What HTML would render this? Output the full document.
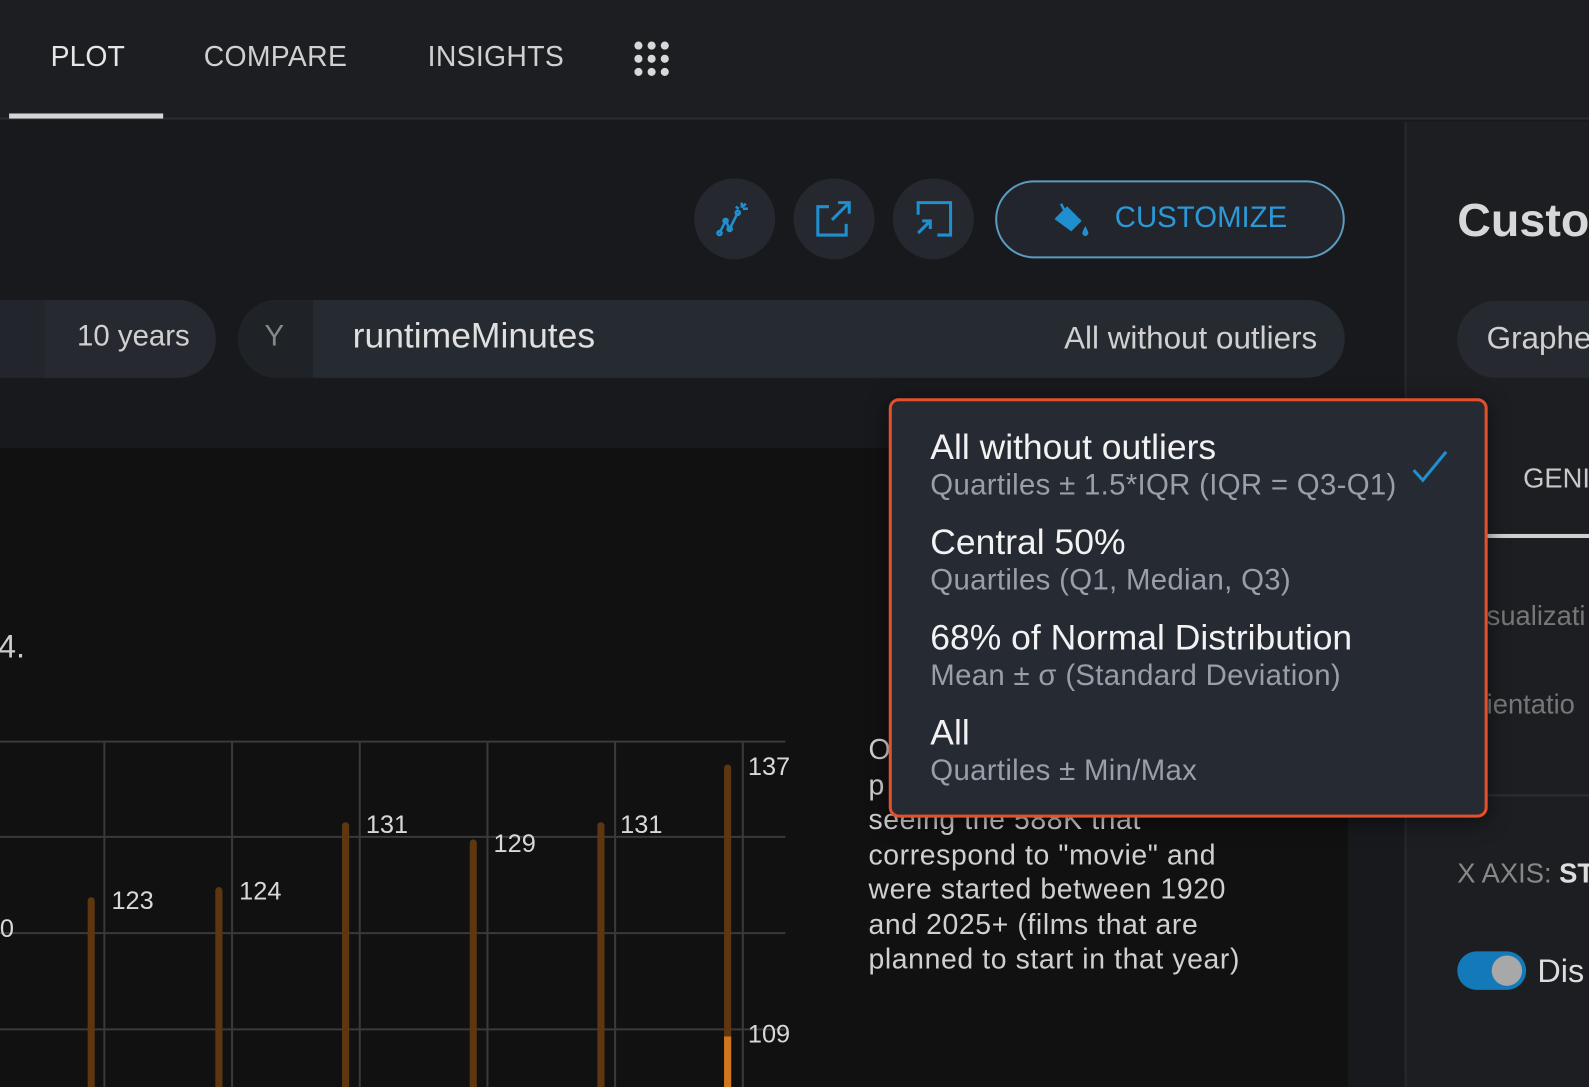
<!DOCTYPE html>
<html><head><meta charset="utf-8"><style>
*{margin:0;padding:0;box-sizing:border-box}
html,body{width:1589px;height:1073px;overflow:hidden;background:#17191c}
#w{position:absolute;left:0;top:0;width:1568px;height:1059px;transform:scale(1.0134,1.0132);transform-origin:0 0;font-family:"Liberation Sans",sans-serif;color:#ddd;background:#17191c}
.a{position:absolute;white-space:nowrap}
</style></head><body><div id="w">
<!-- nav -->
<div class="a" style="left:0;top:0;width:1568px;height:118px;background:#1c1e22;border-bottom:2px solid #2a2d31"></div>
<div class="a" style="left:50px;top:40px;font-size:28px;color:#e6e6e6">PLOT</div>
<div class="a" style="left:201px;top:40px;font-size:28px;color:#d0d0d0;letter-spacing:0.3px">COMPARE</div>
<div class="a" style="left:422px;top:40px;font-size:28px;color:#d0d0d0;letter-spacing:0.3px">INSIGHTS</div>
<svg class="a" style="left:624px;top:40px" width="40" height="38"><g fill="#d8d8d8">
<circle cx="6" cy="5" r="4"/><circle cx="19" cy="5" r="4"/><circle cx="32" cy="5" r="4"/>
<circle cx="6" cy="18" r="4"/><circle cx="19" cy="18" r="4"/><circle cx="32" cy="18" r="4"/>
<circle cx="6" cy="31" r="4"/><circle cx="19" cy="31" r="4"/><circle cx="32" cy="31" r="4"/></g></svg>
<div class="a" style="left:9px;top:112px;width:152px;height:5px;background:#d6d6d6"></div>
<!-- right panel -->
<div class="a" style="left:1386px;top:120px;width:190px;height:953px;background:#1c1e22;border-left:2px solid #25282c"></div>
<div class="a" style="left:1438px;top:190px;font-size:46px;font-weight:bold;color:#d8d8d8">Custo</div>
<div class="a" style="left:1438px;top:297px;width:200px;height:76px;border-radius:38px;background:#262a30"></div>
<div class="a" style="left:1467px;top:316px;font-size:31px;color:#d0d0d0">Graphe</div>
<div class="a" style="left:1503px;top:457px;font-size:27px;color:#c8c8c8">GENI</div>
<div class="a" style="left:1467px;top:527px;width:122px;height:4px;background:#d0d0d0"></div>
<div class="a" style="left:1467px;top:593px;font-size:27px;color:#777">sualizati</div>
<div class="a" style="left:1467px;top:680px;font-size:27px;color:#777">ientatio</div>
<div class="a" style="left:1467px;top:784px;width:122px;height:2px;background:#2c2f34"></div>
<div class="a" style="left:1438px;top:847px;font-size:27px;color:#888">X AXIS: <span style="color:#ddd;font-weight:bold">ST</span></div>
<div class="a" style="left:1438px;top:939px;width:68px;height:38px;border-radius:19px;background:#1479b8"></div>
<div class="a" style="left:1472px;top:943px;width:30px;height:30px;border-radius:15px;background:#a8a8a8"></div>
<div class="a" style="left:1517px;top:940px;font-size:32px;color:#ddd">Dis</div>
<!-- toolbar -->
<div class="a" style="left:685px;top:176px;width:80px;height:80px;border-radius:40px;background:#25282e"></div>
<div class="a" style="left:783px;top:176px;width:80px;height:80px;border-radius:40px;background:#25282e"></div>
<div class="a" style="left:881px;top:176px;width:80px;height:80px;border-radius:40px;background:#25282e"></div>
<svg class="a" style="left:704px;top:196px" width="40" height="40" fill="none" stroke="#1f8fd0" stroke-width="2.5">
<path d="M6 34 L12 22 L16 30 L24 14"/><circle cx="6" cy="34" r="2"/><circle cx="12" cy="22" r="2"/><circle cx="16" cy="30" r="2"/><circle cx="24" cy="14" r="2"/>
<path d="M28 4v5M34 10h-5M32 5l-3 3M22 8l3 2"/></svg>
<svg class="a" style="left:802px;top:196px" width="40" height="40" fill="none" stroke="#1f8fd0" stroke-width="3">
<path d="M16 8H5v28h28V25"/><path d="M19 21L36 4M25 4h11v11"/></svg>
<svg class="a" style="left:900px;top:196px" width="42" height="40" fill="none" stroke="#1f8fd0" stroke-width="3">
<path d="M6 16V4h32v32H25"/><path d="M6 34L18 22M10 22h8v8"/></svg>
<div class="a" style="left:982px;top:178px;width:345px;height:77px;border-radius:39px;border:2.5px solid #5c9cc2;background:#22262c"></div>
<svg class="a" style="left:1038px;top:199px" width="40" height="36"><path d="M4 17L15 6l13 13-9 9z" fill="#1f8fd0" stroke="#1f8fd0" stroke-width="2"/><path d="M12 8L9 2" stroke="#1f8fd0" stroke-width="2.5"/><path d="M33 24c-2 4-3 6-3 7a3 3 0 006 0c0-1-1-3-3-7z" fill="#1f8fd0"/></svg>
<div class="a" style="left:1100px;top:199px;font-size:29px;color:#2d98d6">CUSTOMIZE</div>
<!-- filter row -->
<div class="a" style="left:-40px;top:296px;width:253px;height:77px;border-radius:38px;background:#262a30"></div>
<div class="a" style="left:0;top:296px;width:44px;height:77px;background:#22252b"></div>
<div class="a" style="left:76px;top:316px;font-size:29px;color:#d0d0d0">10 years</div>
<div class="a" style="left:235px;top:296px;width:1092px;height:77px;border-radius:38px;background:#262a31;overflow:hidden"><div style="width:74px;height:77px;background:#1f2227"></div></div>
<div class="a" style="left:261px;top:316px;font-size:29px;color:#888">Y</div>
<div class="a" style="left:348px;top:312px;font-size:35px;color:#e0e0e0">runtimeMinutes</div>
<div class="a" style="left:1050px;top:316px;font-size:31px;color:#d0d0d0">All without outliers</div>
<!-- chart area -->
<div class="a" style="left:0;top:442px;width:1330px;height:631px;background:#111111"></div>
<div class="a" style="left:-2px;top:620px;font-size:32px;color:#ccc">4.</div>
<svg class="a" style="left:0;top:700px" width="800" height="373">
<g stroke="#3a3a3a" stroke-width="2">
<path d="M0 32H775M0 126H775M0 221H775M0 316H775"/>
<path d="M103 32V373M229 32V373M355 32V373M481 32V373M607 32V373M733 32V373"/></g>
<g stroke="#5e3710" stroke-width="7" stroke-linecap="round">
<path d="M90 189V373M216 179V373M341 115V373M467 132V373M593 115V373M718 58V373"/></g>
<path d="M718 323V373" stroke="#d2761e" stroke-width="7"/>
<g fill="#d8d8d8" font-family="Liberation Sans" font-size="25">
<text x="110" y="197">123</text><text x="236" y="188">124</text><text x="361" y="122">131</text>
<text x="487" y="141">129</text><text x="612" y="122">131</text><text x="738" y="65">137</text>
<text x="738" y="329">109</text><text x="-14" y="225">20</text></g></svg>
<div class="a" style="left:857px;top:723px;font-size:28px;line-height:34.5px;color:#d0d0d0;letter-spacing:0.6px">O<br>p<br>seeing the 588K that<br>correspond to "movie" and<br>were started between 1920<br>and 2025+ (films that are<br>planned to start in that year)</div>
<!-- dropdown -->
<div class="a" style="left:877px;top:393px;width:591px;height:414px;border:3px solid #e4502c;border-radius:10px;background:#262a33;box-shadow:0 4px 20px rgba(0,0,0,.5)"></div>
<div class="a" style="left:918px;top:422px;font-size:35px;color:#f2f2f2">All without outliers</div>
<div class="a" style="left:918px;top:463px;font-size:29px;color:#9a9ea6;letter-spacing:0.3px">Quartiles ± 1.5*IQR (IQR = Q3-Q1)</div>
<svg class="a" style="left:1393px;top:444px" width="36" height="34"><path d="M2 20l9 10L34 2" fill="none" stroke="#1f8fd0" stroke-width="3"/></svg>
<div class="a" style="left:918px;top:516px;font-size:35px;color:#f2f2f2">Central 50%</div>
<div class="a" style="left:918px;top:557px;font-size:29px;color:#9a9ea6;letter-spacing:0.3px">Quartiles (Q1, Median, Q3)</div>
<div class="a" style="left:918px;top:610px;font-size:35px;color:#f2f2f2">68% of Normal Distribution</div>
<div class="a" style="left:918px;top:651px;font-size:29px;color:#9a9ea6;letter-spacing:0.3px">Mean ± σ (Standard Deviation)</div>
<div class="a" style="left:918px;top:704px;font-size:35px;color:#f2f2f2">All</div>
<div class="a" style="left:918px;top:745px;font-size:29px;color:#9a9ea6;letter-spacing:0.3px">Quartiles ± Min/Max</div>
</div></body></html>
